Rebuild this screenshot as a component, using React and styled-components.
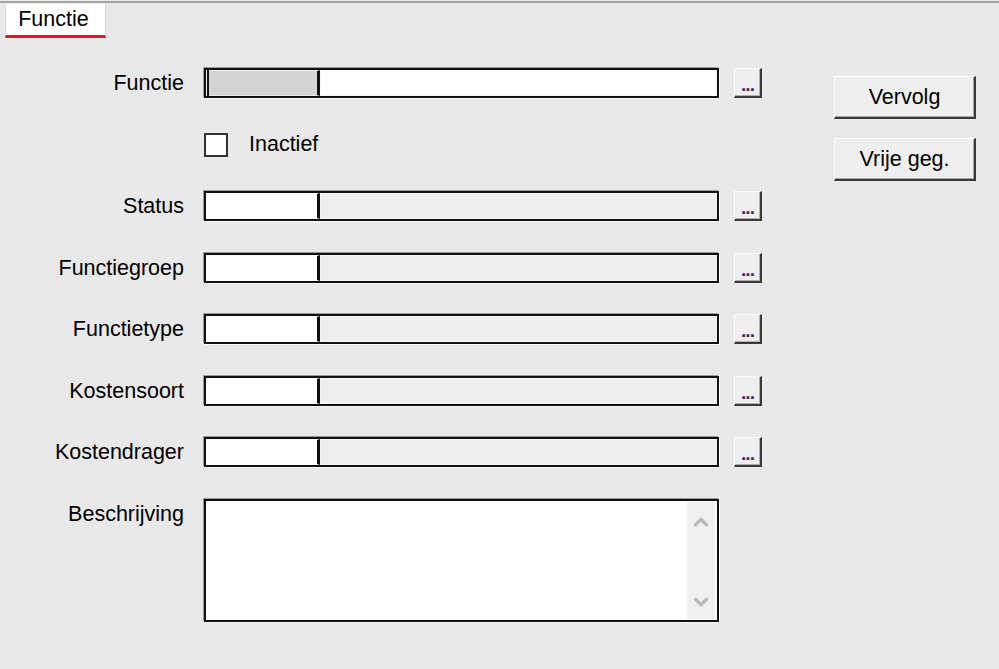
import React from 'react'
import styled, { createGlobalStyle } from 'styled-components'
import { ChevronUp, ChevronDown } from 'lucide-react'

const Global = createGlobalStyle`
  html, body {
    margin: 0;
    padding: 0;
    background: #e9e9e9;
  }
  body {
    font-family: "Liberation Sans", Arial, sans-serif;
    font-size: 21.5px;
    color: #000;
  }
`

const Window = styled.div`
  width: 999px;
  height: 669px;
  box-sizing: border-box;
  margin-top: 1px;
  border-top: 2px solid #a6a6a6;
  background: #e9e9e9;
`

const TabBar = styled.div`
  display: flex;
  padding: 1px 0 0 5px;
  height: 34px;
`

const Tab = styled.div`
  width: 101px;
  height: 34px;
  box-sizing: border-box;
  background: #fff;
  border-left: 1px solid #dadada;
  border-right: 1px solid #dadada;
  border-bottom: 3px solid #e8112d;
  display: flex;
  justify-content: center;
  padding-top: 2px;
  padding-right: 4px;
  line-height: 26px;
`

const Body = styled.div`
  display: flex;
  padding-top: 30px;
`

const Form = styled.div`
  display: flex;
  flex-direction: column;
  gap: 31.5px;
`

const Row = styled.div`
  display: flex;
  align-items: flex-start;
  min-height: 30px;
`

const Label = styled.div`
  width: 184px;
  margin-right: 20px;
  text-align: right;
  line-height: 30px;
  height: 30px;
  white-space: nowrap;
`

const Field = styled.div`
  width: 515px;
  height: 30px;
  box-sizing: border-box;
  border: 2px solid #111;
  box-shadow: 1px 1px 0 #fbfbfb, -1px -1px 0 #9a9a9a;
  display: flex;
  background: ${p => (p.$rest ? p.$rest : '#eeeeee')};
`

const Code = styled.div`
  width: 114px;
  height: 100%;
  box-sizing: border-box;
  background: ${p => (p.$active ? '#d4d4d4' : '#fff')};
  border: 1px solid ${p => (p.$active ? '#ececec' : '#fff')};
  border-right: 3px solid #111;
  position: relative;
`

const Caret = styled.span`
  position: absolute;
  left: 0;
  top: -1px;
  bottom: -1px;
  width: 2px;
  background: #111;
`

const Rest = styled.div`
  flex: 1;
  border: 1px solid #f7f7f7;
`

const Browse = styled.button`
  width: 28px;
  height: 30px;
  margin-left: 15px;
  padding: 0 0 5px 0;
  box-sizing: border-box;
  background: #efefef;
  border: none;
  border-top: 1px solid #fcfcfc;
  border-left: 1px solid #fcfcfc;
  border-right: 2px solid #3a3a3a;
  border-bottom: 2px solid #3a3a3a;
  box-shadow: inset -1px -1px 0 #b0b0b0;
  font-family: "Liberation Sans", Arial, sans-serif;
  font-size: 19px;
  font-weight: bold;
  line-height: 12px;
  color: #3a2a6a;
  display: flex;
  align-items: flex-end;
  justify-content: center;
  letter-spacing: -1px;
`

const CheckRow = styled.div`
  display: flex;
  align-items: center;
  height: 30px;
  margin-left: 204px;
`

const Box = styled.div`
  width: 24px;
  height: 24px;
  box-sizing: border-box;
  background: #fff;
  border: 2px solid #333;
  margin-right: 21px;
`

const Memo = styled.div`
  width: 515px;
  height: 123px;
  box-sizing: border-box;
  border: 2px solid #111;
  box-shadow: 1px 1px 0 #fbfbfb, -1px -1px 0 #9a9a9a;
  background: #fff;
  display: flex;
  justify-content: flex-end;
`

const ScrollBar = styled.div`
  width: 28px;
  margin: 1px 2px 1px 0;
  background: #f0f0f0;
  display: flex;
  flex-direction: column;
  justify-content: space-between;
  align-items: center;
  padding: 9px 0 6px;
  color: #b8b8b8;
`

const Side = styled.div`
  display: flex;
  flex-direction: column;
  gap: 19px;
  margin-left: 72px;
  padding-top: 8px;
`

const Btn = styled.button`
  width: 142px;
  height: 43px;
  box-sizing: border-box;
  background: #efefef;
  border: none;
  border-top: 1px solid #fdfdfd;
  border-left: 1px solid #fdfdfd;
  border-right: 2px solid #3a3a3a;
  border-bottom: 2px solid #3a3a3a;
  box-shadow: inset -1px -1px 0 #a8a8a8;
  font-family: "Liberation Sans", Arial, sans-serif;
  font-size: 21.5px;
  color: #000;
  padding: 0;
`

const rows = ['Status', 'Functiegroep', 'Functietype', 'Kostensoort', 'Kostendrager']

export default function App() {
  return (
    <Window>
      <Global />
      <TabBar>
        <Tab>Functie</Tab>
      </TabBar>
      <Body>
        <Form>
          <Row>
            <Label>Functie</Label>
            <Field $rest="#fff">
              <Code $active>
                <Caret />
              </Code>
              <Rest />
            </Field>
            <Browse>...</Browse>
          </Row>
          <CheckRow>
            <Box />
            <span>Inactief</span>
          </CheckRow>
          {rows.map(r => (
            <Row key={r}>
              <Label>{r}</Label>
              <Field>
                <Code />
                <Rest />
              </Field>
              <Browse>...</Browse>
            </Row>
          ))}
          <Row>
            <Label>Beschrijving</Label>
            <Memo>
              <ScrollBar>
                <ChevronUp size={22} strokeWidth={3.5} />
                <ChevronDown size={22} strokeWidth={3.5} />
              </ScrollBar>
            </Memo>
          </Row>
        </Form>
        <Side>
          <Btn>Vervolg</Btn>
          <Btn>Vrije geg.</Btn>
        </Side>
      </Body>
    </Window>
  )
}
